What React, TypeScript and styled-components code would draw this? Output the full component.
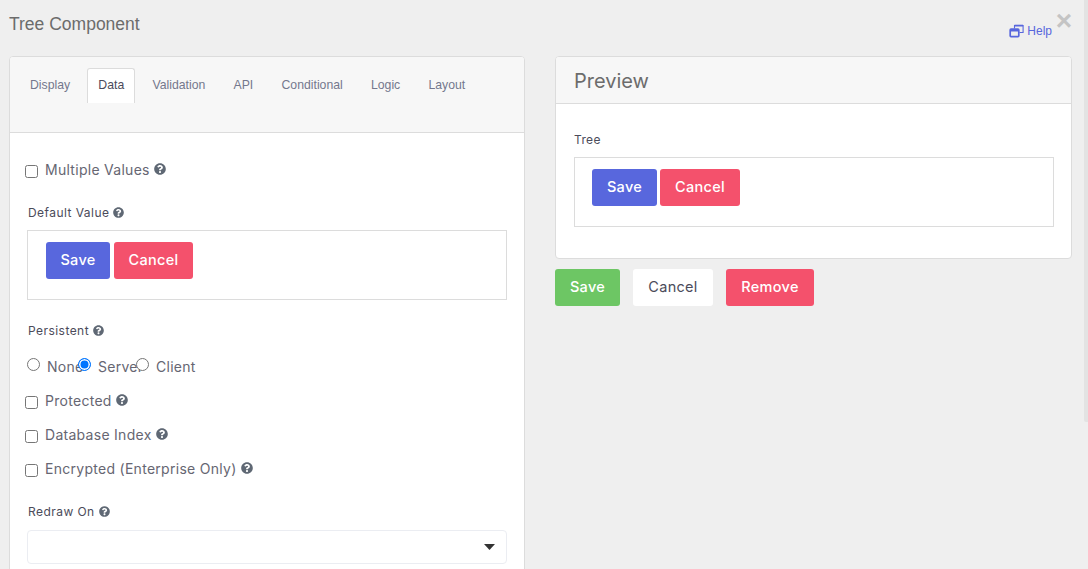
import React from "react";
import styled, { createGlobalStyle } from "styled-components";
import { FaQuestionCircle } from "react-icons/fa";

const Global = createGlobalStyle`
  html, body { margin: 0; padding: 0; height: 569px; overflow: hidden; background: #efefef; }
  * { box-sizing: border-box; }
`;
const BODY = `"Inter", "Noto Sans", sans-serif`;
const ARIAL = `"Liberation Sans", Arial, sans-serif`;

const Page = styled.div`
  height: 569px; overflow: hidden; padding: 0 16px 0 9px; font-family: ${BODY}; color: #4b4b5a; position: relative;
`;
const Thumb = styled.div`
  position: absolute; top: 0; right: 0; width: 4px; height: 422px; background: #e3e3e3; border-bottom-left-radius: 2px;
`;
const Header = styled.header`
  height: 56px; display: flex; justify-content: space-between; position: relative;
`;
const Title = styled.h4`
  margin: 14px 0 0; font: 400 17.5px/21px ${ARIAL}; color: #6c6c6c;
`;
const HelpLink = styled.a`
  margin: 24px 20px 0 0; display: flex; align-items: center; gap: 3px; height: 14px; font: 12px/14px ${ARIAL}; color: #5867dd;
`;
const HelpIcon = styled.svg`
  width: 15px; height: 14px; fill: none; stroke: #5867dd; flex: none;
`;
const Close = styled.span`
  position: absolute; top: 5px; right: 0; font: 700 28px/32px ${ARIAL}; color: #c4c4c4;
`;
const Columns = styled.div`
  display: grid; grid-template-columns: 516px 517px; column-gap: 30px; align-items: start;
`;
const Card = styled.section`
  background: #fff; border: 1px solid #dcdcdc; border-radius: 4px; overflow: hidden;
`;
const TabBar = styled.nav`
  height: 76px; background: #f7f7f7; border-bottom: 1px solid #dcdcdc; padding: 11px 9px 0; display: flex; align-items: flex-start;
`;
const Tab = styled.span<{ $active?: boolean }>`
  height: 35px; padding: 0 10px; margin-right: 6.2px; font: 12.25px/32px ${ARIAL};
  color: ${(p) => (p.$active ? "#4b4b5a" : "#74788d")};
  background: ${(p) => (p.$active ? "#fff" : "transparent")};
  border: 1px solid ${(p) => (p.$active ? "#dcdcdc" : "transparent")};
  border-bottom: 0; border-radius: 3px 3px 0 0;
`;
const Form = styled.div`
  padding: 0 17px 0 15px; height: 440px;
`;
const CheckRow = styled.label<{ $top: number }>`
  display: flex; align-items: center; height: 20px; padding-bottom: 2px; margin-top: ${(p) => p.$top}px; font-size: 14px; letter-spacing: 0.28px; color: #666672;
`;
const Check = styled.span`
  width: 13px; height: 13px; border: 1px solid #767676; border-radius: 2.5px; background: #fff; margin-right: 7px; flex: none; position: relative; top: 2px;
`;
const Help = styled(FaQuestionCircle)`
  color: #5f6874; margin-left: 4px; flex: none;
`;
const FieldLabel = styled.div<{ $top: number }>`
  display: flex; align-items: center; margin: ${(p) => p.$top}px 0 0 3px; height: 18px; font-size: 12px; letter-spacing: 0.45px; color: #4b4b5a;
`;
const ButtonBox = styled.div<{ $ml: number; $mt: number; $pl: number; $gap: number }>`
  margin-top: ${(p) => p.$mt}px; margin-left: ${(p) => p.$ml}px; height: 70px; border: 1px solid #dcdcdc; padding: 11px 0 0 ${(p) => p.$pl}px; display: flex; gap: ${(p) => p.$gap}px; background: #fff;
`;
const Btn = styled.button<{ $bg: string; $fg?: string; $w: number; $weight?: number }>`
  width: ${(p) => p.$w}px; height: 37px; border: 0; border-radius: 3px; padding: 0 0 2px; background: ${(p) => p.$bg}; color: ${(p) => p.$fg ?? "#fff"};
  font: ${(p) => p.$weight ?? 500} 14.5px ${BODY}; letter-spacing: 0.3px;
`;
const Radios = styled.div`
  display: flex; margin: 18px 0 0 2px; height: 20px;
`;
const RadioLabel = styled.label<{ $w: number }>`
  width: ${(p) => p.$w}px; display: flex; font-size: 14px; letter-spacing: 0.28px; color: #666672; line-height: 20px; white-space: nowrap;
`;
const RadioMark = styled.span<{ $on?: boolean }>`
  width: 13px; height: 13px; border-radius: 50%; flex: none; margin: 1px 7px 0 0; position: relative; z-index: 1;
  border: ${(p) => (p.$on ? "1px solid #0075ff" : "1px solid #767676")};
  box-shadow: ${(p) => (p.$on ? "inset 0 0 0 1.5px #fff" : "none")};
  background: ${(p) => (p.$on ? "#0075ff" : "#fff")};
`;
const Select = styled.div`
  margin: 10px 0 0 2px; height: 34px; border: 1px solid #ebedf2; border-radius: 4px; background: #fff; display: flex; align-items: center; justify-content: flex-end; padding-right: 11px;
`;
const Caret = styled.svg`
  width: 11px; height: 6px; fill: #333;
`;
const PreviewHead = styled.div`
  height: 47px; background: #f7f7f7; border-bottom: 1px solid #dcdcdc; padding: 0 18px; font: 400 20px/49px "Inter", ${ARIAL}; color: #6c6c6c;
`;
const PreviewBody = styled.div`
  height: 154px; padding: 27px 17px 0 18px;
`;
const PreviewLabel = styled.div`
  font-size: 12px; line-height: 18px; height: 18px; letter-spacing: 0.35px; color: #4b4b5a;
`;
const Actions = styled.div`
  display: flex; gap: 13px; margin-top: 10px;
`;
const Right = styled.div``;

const Q = ({ s = 12 }: { s?: number }) => <Help size={s} />;

export default function App() {
  return (
    <Page>
      <Global />
      <Thumb />
      <Header>
        <Title>Tree Component</Title>
        <HelpLink>
          <HelpIcon viewBox="0 0 15 14">
            <path d="M5.5 4.5V1.5h8.6v7H10.5" strokeWidth="1.1" />
            <path d="M5.5 1.6h8.6" strokeWidth="1.8" />
            <rect x="1.2" y="5.2" width="8.6" height="7.4" rx="0.8" strokeWidth="1.7" />
            <path d="M1.2 6.4h8.6" strokeWidth="2.2" />
          </HelpIcon>
          Help
        </HelpLink>
        <Close>×</Close>
      </Header>
      <Columns>
        <Card>
          <TabBar>
            <Tab>Display</Tab>
            <Tab $active>Data</Tab>
            <Tab>Validation</Tab>
            <Tab>API</Tab>
            <Tab>Conditional</Tab>
            <Tab>Logic</Tab>
            <Tab>Layout</Tab>
          </TabBar>
          <Form>
            <CheckRow $top={27}><Check />Multiple Values<Q /></CheckRow>
            <FieldLabel $top={23}>Default Value<Q s={11} /></FieldLabel>
            <ButtonBox $ml={2} $mt={9} $pl={18} $gap={4}>
              <Btn $bg="#5867dd" $w={64}>Save</Btn>
              <Btn $bg="#f4516c" $w={79}>Cancel</Btn>
            </ButtonBox>
            <FieldLabel $top={21}>Persistent<Q s={11} /></FieldLabel>
            <Radios>
              <RadioLabel $w={51}><RadioMark />None</RadioLabel>
              <RadioLabel $w={58}><RadioMark $on />Server</RadioLabel>
              <RadioLabel $w={70}><RadioMark />Client</RadioLabel>
            </Radios>
            <CheckRow $top={14}><Check />Protected<Q /></CheckRow>
            <CheckRow $top={14}><Check />Database Index<Q /></CheckRow>
            <CheckRow $top={14}><Check />Encrypted (Enterprise Only)<Q /></CheckRow>
            <FieldLabel $top={23}>Redraw On<Q s={11} /></FieldLabel>
            <Select><Caret viewBox="0 0 11 6"><path d="M0 0h11L5.5 6z" /></Caret></Select>
          </Form>
        </Card>
        <Right>
          <Card>
            <PreviewHead>Preview</PreviewHead>
            <PreviewBody>
              <PreviewLabel>Tree</PreviewLabel>
              <ButtonBox $ml={0} $mt={8} $pl={17} $gap={3}>
                <Btn $bg="#5867dd" $w={65}>Save</Btn>
                <Btn $bg="#f4516c" $w={80}>Cancel</Btn>
              </ButtonBox>
            </PreviewBody>
          </Card>
          <Actions>
            <Btn $bg="#6dc664" $w={65}>Save</Btn>
            <Btn $bg="#fff" $fg="#4b4b5a" $w={80} $weight={400}>Cancel</Btn>
            <Btn $bg="#f4516c" $w={88}>Remove</Btn>
          </Actions>
        </Right>
      </Columns>
    </Page>
  );
}
